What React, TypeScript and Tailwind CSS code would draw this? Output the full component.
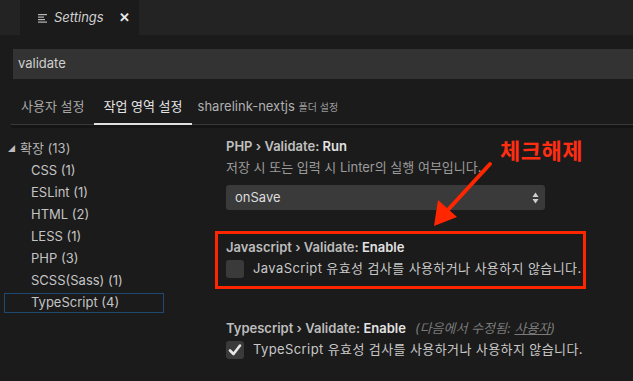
import React from 'react'

const font = { fontFamily: 'Inter, "Noto Sans CJK KR", sans-serif' }

const groups = [
  'CSS (1)',
  'ESLint (1)',
  'HTML (2)',
  'LESS (1)',
  'PHP (3)',
  'SCSS(Sass) (1)',
]

function Checkbox({ checked }: { checked?: boolean }) {
  return (
    <div className="w-[18px] h-[18px] rounded-[3px] bg-[#3a3a3a] flex items-center justify-center shrink-0">
      {checked && (
        <svg width="14" height="14" viewBox="0 0 14 14">
          <path d="M2 7.5 L5.5 11 L12 2.5" fill="none" stroke="#e8e8e8" strokeWidth="2.6" strokeLinecap="round" strokeLinejoin="round" />
        </svg>
      )}
    </div>
  )
}

export default function App() {
  return (
    <div className="w-[633px] h-[381px] bg-[#1b1b1b] text-[#cccccc] overflow-hidden relative" style={font}>
      {/* Tab bar */}
      <div className="h-[35px] bg-[#232323] flex">
        <div className="w-[20px]" />
        <div className="w-[119px] bg-[#1b1b1b] flex items-center pl-[18px] text-[13px]">
          <svg width="10" height="10" viewBox="0 0 10 10" className="mr-[6px]">
            <rect x="0" y="1" width="9" height="1.2" fill="#b8b8b8" />
            <rect x="0" y="3.5" width="6" height="1.2" fill="#b8b8b8" />
            <rect x="0" y="6" width="7" height="1.2" fill="#b8b8b8" />
            <rect x="0" y="8.5" width="9" height="1.2" fill="#b8b8b8" />
          </svg>
          <span className="italic text-[#d0d0d0]">Settings</span>
          <span className="ml-auto mr-[9px] text-[#e8e8e8] text-[13px] font-bold">✕</span>
        </div>
      </div>

      {/* Search */}
      <div className="pl-[13px] pt-[14px]">
        <div className="h-[30px] bg-[#333333] flex items-center pl-[5px] text-[13px] text-[#cfcfcf]">validate</div>
      </div>

      {/* Scope tabs */}
      <div className="ml-[11px] mt-[12px] border-b border-[#3a3a3a] flex items-end h-[34px] text-[13px]">
        <div className="px-[10px] pb-[8px] text-[#a8a8a8]">사용자 설정</div>
        <div className="px-[9px] pb-[7px] text-[#e6e6e6] border-b-2 border-[#e0e0e0] -mb-px">작업 영역 설정</div>
        <div className="px-[6px] pb-[8px] text-[#b0b0b0]">
          sharelink-nextjs <span className="text-[10px] text-[#9a9a9a]">폴더 설정</span>
        </div>
      </div>
      <div className="ml-[11px] h-[3px] bg-[#141414]" />

      <div className="flex">
        {/* Tree */}
        <div className="w-[170px] pt-[10px] text-[13px]">
          <div className="h-[22px] flex items-center pl-[8px] text-[#b8b8b8]">
            <span className="text-[7px] mr-[5px] text-[#bbbbbb]">◢</span>
            확장 (13)
          </div>
          {groups.map(g => (
            <div key={g} className="h-[22px] flex items-center pl-[31px] text-[#c4c4c4]">{g}</div>
          ))}
          <div className="h-[20px] mt-[1px] ml-[4px] w-[160px] border border-[#1e4a72] flex items-center pl-[26px] text-[#c4c4c4]">
            TypeScript (4)
          </div>
        </div>

        {/* Settings list */}
        <div className="flex-1 pl-[45px] pt-[9px] text-[13px]">
          <div className="pl-[11px]">
            <div className="text-[#c0c0c0] font-semibold h-[20px] flex items-center">
              <span>PHP › Validate:&nbsp;</span><span className="text-[#e2e2e2]">Run</span>
            </div>
            <div className="text-[#9c9c9c] h-[22px] flex items-center">저장 시 또는 입력 시 Linter의 실행 여부입니다.</div>
            <div className="mt-[6px] w-[319px] h-[25px] rounded-[3px] bg-[#3a3a3a] flex items-center pl-[9px] pr-[6px] text-[#dcdcdc]">
              onSave
              <svg className="ml-auto" width="7" height="12" viewBox="0 0 7 12">
                <path d="M3.5 0.5 L6.5 5 H0.5 Z" fill="#d0d0d0" />
                <path d="M3.5 11.5 L6.5 7 H0.5 Z" fill="#d0d0d0" />
              </svg>
            </div>
          </div>

          <div className="mt-[21px] w-[371px] h-[58px] border-[3px] border-[#ff2600] pl-[8px] pt-[4px]">
            <div className="text-[#bdbdbd] font-semibold h-[20px] flex items-center">
              <span>Javascript › Validate:&nbsp;</span><span className="text-[#e2e2e2]">Enable</span>
            </div>
            <div className="flex items-center h-[22px]">
              <Checkbox />
              <span className="ml-[9px] text-[#c8c8c8] tracking-[0.4px]">JavaScript 유효성 검사를 사용하거나 사용하지 않습니다.</span>
            </div>
          </div>

          <div className="pl-[11px] mt-[30px]">
            <div className="font-semibold h-[20px] flex items-center text-[#bdbdbd]">
              <span>Typescript › Validate:&nbsp;</span><span className="text-[#e2e2e2]">Enable</span>
              <span className="ml-[9px] italic font-normal text-[13px] text-[#7a7a7a]">
                (다음에서 수정됨: <span className="underline">사용자</span>)
              </span>
            </div>
            <div className="flex items-center h-[22px]">
              <Checkbox checked />
              <span className="ml-[9px] text-[#c8c8c8] tracking-[0.4px]">TypeScript 유효성 검사를 사용하거나 사용하지 않습니다.</span>
            </div>
          </div>
        </div>
      </div>

      {/* Annotation */}
      <div className="absolute left-[500px] top-[135px] text-[22px] font-bold text-[#ff2d12] tracking-[0.5px]">체크해제</div>
      <svg className="absolute left-0 top-0 pointer-events-none" width="633" height="381">
        <line x1="490" y1="164" x2="446" y2="212" stroke="#ff2600" strokeWidth="4" strokeLinecap="round" />
        <path d="M434 226 L438 200 L457 217 Z" fill="#ff2600" />
      </svg>
    </div>
  )
}
